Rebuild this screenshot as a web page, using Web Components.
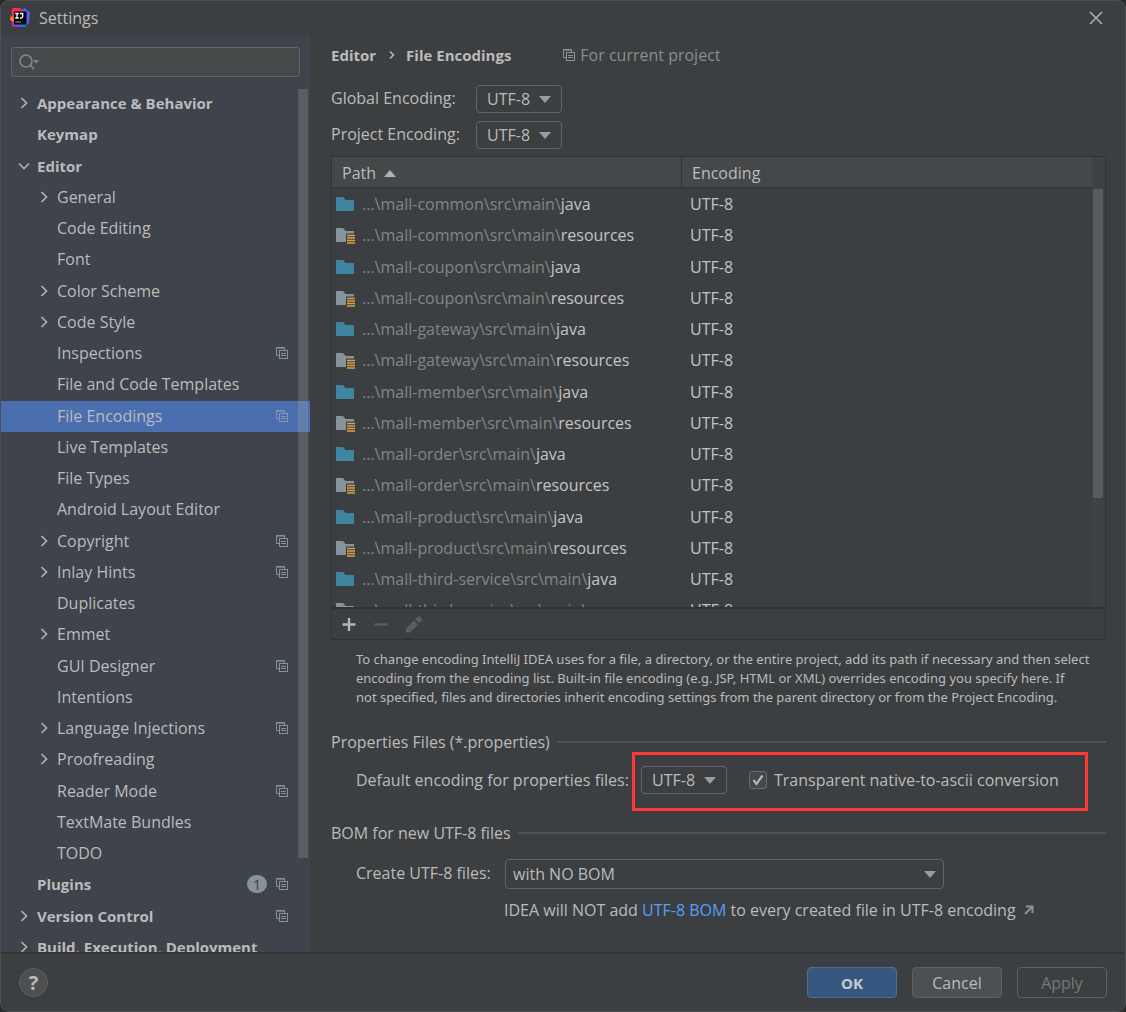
<!DOCTYPE html>
<html lang="en">
<head>
<meta charset="utf-8">
<title>Settings</title>
<style>
  html, body { margin: 0; height: 100%; background: #2b2b2b; }
  body { font: 16px/20px "Open Sans", "Noto Sans", sans-serif; color: #bbbbbb; }
</style>
</head>
<body>
<settings-window></settings-window>
<script>
const define = (name, render) => customElements.define(name, class extends HTMLElement {
  connectedCallback() {
    if (this.shadowRoot) return;
    const root = this.attachShadow({ mode: 'open' });
    const template = document.createElement('template');
    template.innerHTML = render(this);
    root.append(template.content.cloneNode(true));
  }
});

/* Overlapping sheets: marks a setting kept per project */
define('project-mark', () => `
  <style>:host { display: block; width: 12px; height: 12px; flex: none; color: #87939a; } svg { display: block; }</style>
  <svg width="12" height="12" viewBox="0 0 12 12" fill="none" stroke="currentColor" aria-hidden="true">
    <path d="M3 8.500H.5v-8h8V3"/><path d="M1 1.500h7" opacity=".6"/>
    <rect x="3.500" y="3.500" width="8" height="8"/><path d="M5 6.500h5M5 8.500h5"/>
  </svg>`);

define('app-logo', () => `
  <style>:host { display: block; width: 20px; height: 20px; } svg { display: block; }</style>
  <svg width="20" height="20" viewBox="0 0 20 20" aria-hidden="true">
    <path d="M1.500 3 3 0h7l4 4-9 10-4-1-1-4 2-2z" fill="#fe2857"/>
    <path d="m0 10 3-2 2 6-3-.5-2-2z" fill="#fc801d"/>
    <path d="M12 1.500 14.500 0l5 4-1 12-6 3-5-2 5-12z" fill="#3b6cf0"/>
    <path d="m16 3 4 2-1 9-3 2z" fill="#5f5cf5"/>
    <path d="m2 14 5-2 4 7-9-.5z" fill="#a736c4"/>
    <path d="M10 15h7l-2 4-5-.5z" fill="#087cfa"/>
    <rect x="4" y="3.500" width="12.500" height="13" fill="#050505"/>
    <path d="M5.200 5.500h3.600M7 5.500v4.500M5.200 10h3.600M10 5.500h2.700v3q0 1.500-1.500 1.500H10" fill="none" stroke="#fff" stroke-width="1.300"/>
    <path d="M5.500 14h5" stroke="#aaa"/>
  </svg>`);

define('title-bar', () => `
  <style>
    :host { display: flex; align-items: center; height: 34px; padding: 0 22px 0 9px; flex: none; }
    h1 { flex: 1; margin: 0 0 0 9px; font: inherit; }
    button { border: 0; padding: 0; background: none; width: 14px; height: 14px; color: #bbb; }
    svg { display: block; }
  </style>
  <app-logo></app-logo><h1><slot></slot></h1>
  <button aria-label="Close"><svg width="14" height="14" viewBox="0 0 14 14" stroke="currentColor" stroke-width="1.300"><path d="m1 1 12 12M13 1 1 13"/></svg></button>`);

define('search-field', () => `
  <style>
    :host { display: flex; align-items: center; height: 28px; margin: 12px 10px 11px; border: 1px solid #646464; border-radius: 3px; background: #45494a; padding-left: 6px; }
    svg { flex: none; }
    input { flex: 1; min-width: 0; border: 0; background: none; color: inherit; font: inherit; outline: 0; }
  </style>
  <svg width="22" height="18" viewBox="0 0 22 18" fill="none" stroke="#7f8b91" stroke-width="1.600" aria-hidden="true">
    <circle cx="8" cy="8" r="6"/><path d="m12.200 12.200 3.800 3.800"/><path d="M15 7h6l-3 3.500z" fill="#7f8b91" stroke="none"/>
  </svg>
  <input type="text" aria-label="Search settings">`);

define('tree-row', el => {
  const chevron = el.hasAttribute('open') ? 'm1 3.500 5 5 5-5' : 'm3.500 1 5 5-5 5';
  return `
  <style>
    :host { display: flex; align-items: center; box-sizing: border-box; height: 31px; padding: 0 22px 2px 17px; white-space: nowrap; }
    :host([child]) { padding-left: 37px; }
    :host(:not([child])) { font-weight: 700; font-size: 15px; }
    :host([selected]) { background: #4b6eaf; }
    svg { flex: none; margin-right: 7px; }
    .text { flex: 1; }
    .count { width: 20px; height: 18px; margin-right: 9px; border-radius: 9px; background: #87939a; color: #3c3f41; font: 15px/18px "Open Sans", sans-serif; text-align: center; }
    :host([selected]) project-mark { color: #8797b3; }
  </style>
  <svg width="12" height="12" viewBox="0 0 12 12" fill="none" stroke="#afb1b3" stroke-width="1.700" aria-hidden="true">${el.hasAttribute('group') ? `<path d="${chevron}"/>` : ''}</svg>
  <span class="text"><slot></slot></span>
  ${el.hasAttribute('count') ? `<span class="count">${el.getAttribute('count')}</span>` : ''}
  ${el.hasAttribute('shared') ? '<project-mark></project-mark>' : ''}`;
});

const rows = [
  ['Appearance & Behavior', 'group'], ['Keymap', ''], ['Editor', 'group open'],
  ['General', 'child group'], ['Code Editing', 'child'], ['Font', 'child'],
  ['Color Scheme', 'child group'], ['Code Style', 'child group'], ['Inspections', 'child shared'],
  ['File and Code Templates', 'child'], ['File Encodings', 'child shared selected'],
  ['Live Templates', 'child'], ['File Types', 'child'], ['Android Layout Editor', 'child'],
  ['Copyright', 'child group shared'], ['Inlay Hints', 'child group shared'], ['Duplicates', 'child'],
  ['Emmet', 'child group'], ['GUI Designer', 'child shared'], ['Intentions', 'child'],
  ['Language Injections', 'child group shared'], ['Proofreading', 'child group'],
  ['Reader Mode', 'child shared'], ['TextMate Bundles', 'child'], ['TODO', 'child'],
  ['Plugins', 'count="1" shared'], ['Version Control', 'group shared'],
  ['Build, Execution, Deployment', 'group']
];

define('settings-tree', () => `
  <style>
    :host { display: block; position: relative; flex: 1; min-height: 0; overflow: hidden; }
    tree-row:nth-child(4n+2) { height: 32px; }
    .thumb { position: absolute; top: 1px; right: 2px; width: 10px; height: 89%; background: rgba(166, 166, 166, .28); }
  </style>
  <div role="tree">${rows.map(([label, attrs]) => `<tree-row role="treeitem" ${attrs}>${label.replace('&', '&amp;')}</tree-row>`).join('')}</div>
  <div class="thumb"></div>`);

define('side-panel', () => `
  <style>:host { display: flex; flex-direction: column; width: 309px; flex: none; background: #3e434c; overflow: hidden; }</style>
  <search-field></search-field><settings-tree></settings-tree>`);

/* Labelled drop-down; "wide" gives the full-size combo box */
define('drop-down', el => `
  <style>
    :host { display: flex; align-items: center; }
    .label { width: var(--label-width, auto); padding-bottom: 2px; white-space: nowrap; }
    .box { position: relative; }
    select { appearance: none; display: block; box-sizing: border-box; width: 86px; height: 28px; margin: 0; padding: 0 0 0 10px; border: 1px solid #646464; border-radius: 4px; background: #3c3f41; color: inherit; font: inherit; }
    svg { position: absolute; right: 11px; top: 50%; margin-top: -3px; pointer-events: none; }
    :host([wide]) select { width: 439px; height: 30px; padding-left: 7px; }
    :host([wide]) svg { right: 8px; }
  </style>
  <label class="label" for="list"><slot></slot></label>
  <span class="box"><select id="list" ${el.hasAttribute('name-text') ? `aria-label="${el.getAttribute('name-text')}"` : ''}><option>${el.getAttribute('value')}</option></select>
  <svg width="12" height="7" viewBox="0 0 12 7" aria-hidden="true"><path d="M0 0h12L6 7z" fill="#9a9da0"/></svg></span>`);

const folder = res => `<svg width="20" height="18" viewBox="0 0 20 18" aria-hidden="true">
  <path d="M0 2h7l2.500 3H18v11H0z" fill="${res ? '#87939a' : '#3e86a0'}"/>
  ${res ? '<path d="M10 7.500h10V18H10z" fill="#3c3f41"/><path d="M11 9.500h8M11 12h8M11 14.500h8M11 17h8" stroke="#d9a343" stroke-width="1.400"/>' : ''}</svg>`;

define('path-table', () => {
  const modules = ['common', 'coupon', 'gateway', 'member', 'order', 'product', 'third-service'];
  const body = modules.flatMap(m => ['java', 'resources'].map(leaf => `
    <tr><td><div class="path">${folder(leaf !== 'java')}<span><span class="dir">...\\mall-${m}\\src\\main\\</span>${leaf}</span></div></td><td>UTF-8</td></tr>`)).join('');
  return `
  <style>
    :host { display: flex; flex-direction: column; flex: 1; min-height: 0; border: 1px solid #323232; }
    .scroll { position: relative; flex: 1; min-height: 0; overflow: hidden; padding-right: 13px; background: linear-gradient(#3f4244, #3f4244) right / 13px 100% no-repeat; }
    table { width: 100%; border-spacing: 0; table-layout: fixed; background: #3c3f41; }
    th { box-sizing: border-box; height: 32px; padding: 2px 10px 0; background: #45484a; border-bottom: 2px solid #37393b; text-align: left; font-weight: 400; }
    th:first-child { width: 350px; border-right: 1px solid #323232; }
    th svg { margin: 0 0 2px 4px; }
    td { box-sizing: border-box; height: 31px; padding: 0 8px 2px; color: #c4c4c4; }
    td:first-child { padding: 0 4px 2px; }
    tr:nth-child(4n+2) td { height: 32px; }
    .path { display: flex; align-items: center; gap: 6px; white-space: nowrap; }
    .dir { color: #858585; }
    .thumb { position: absolute; top: 32px; right: 2px; width: 10px; height: 309px; background: #595c5d; }
    .tools { display: flex; align-items: center; gap: 12px; height: 30px; padding-left: 7px; border-top: 2px solid #323232; }
    button { width: 20px; height: 20px; padding: 0; border: 0; background: none; color: #b4b6b8; }
    button:disabled { color: #5b5e60; }
    button svg { display: block; }
  </style>
  <div class="scroll">
    <table>
      <thead><tr><th>Path <svg width="12" height="7" viewBox="0 0 12 7" aria-hidden="true"><path d="M0 7h12L6 0z" fill="#afb1b3"/></svg></th><th>Encoding</th></tr></thead>
      <tbody>${body}</tbody>
    </table>
    <div class="thumb"></div>
  </div>
  <div class="tools">
    <button aria-label="Add"><svg width="20" height="20" stroke="currentColor" stroke-width="2.400"><path d="M10 4v13M3.500 10.500h13"/></svg></button>
    <button aria-label="Remove" disabled><svg width="20" height="20" stroke="currentColor" stroke-width="2.400"><path d="M3.500 10.500h13"/></svg></button>
    <button aria-label="Edit" disabled><svg width="20" height="20" fill="currentColor"><path d="M3 14.500v4h4l8-8-4-4zM12.200 5.300l4 4 3-3-.2-1.300-2.500-2.500-1.300-.2z"/></svg></button>
  </div>`;
});

define('titled-rule', () => `
  <style>
    :host { display: flex; align-items: center; gap: 7px; height: 20px; }
    .line { flex: 1; height: 2px; background: #515151; }
  </style>
  <slot></slot><span class="line"></span>`);

define('check-option', () => `
  <style>
    :host { display: flex; align-items: center; gap: 7px; white-space: nowrap; }
    input { appearance: none; box-sizing: border-box; width: 18px; height: 18px; margin: 0; border: 1px solid #6b6b6b; border-radius: 3px; background: #43494a; }
    .box { position: relative; display: block; height: 18px; }
    svg { position: absolute; inset: 0; pointer-events: none; }
    input:not(:checked) + svg { display: none; }
  </style>
  <span class="box"><input type="checkbox" id="tick" checked><svg width="18" height="18" viewBox="0 0 18 18" fill="none" stroke="#b4b6b8" stroke-width="2.200" aria-hidden="true"><path d="m4.500 9 3 4 6-8.500"/></svg></span>
  <label for="tick"><slot></slot></label>`);

define('encoding-page', () => `
  <style>
    :host { display: flex; flex-direction: column; flex: 1; min-width: 0; padding: 10px 19px 0 21px; }
    .crumbs { display: flex; align-items: center; height: 20px; font-size: 15px; font-weight: 700; }
    .crumbs svg { margin: 0 11px 0 13px; }
    .scope { display: flex; align-items: center; gap: 5px; margin-left: 52px; font-size: 16px; font-weight: 400; color: #8c8c8c; }
    .pair { display: flex; flex-direction: column; gap: 8px; margin: 20px 0 7px; --label-width: 145px; }
    .note { margin: 10px 0 25px 25px; font: 13px/19px "Noto Sans", sans-serif; white-space: nowrap; }
    .indent { display: flex; align-items: center; margin: 0 0 12px 25px; }
    .caption { width: 276px; padding-bottom: 4px; white-space: nowrap; }
    .marked { display: flex; align-items: center; gap: 22px; box-sizing: border-box; width: 456px; height: 59px; padding: 0 0 3px 6px; border: 3px solid #ff3838; }
    .combo { --label-width: 149px; margin: 16px 0 11px 25px; }
    .hint { margin: 0 0 32px 173px; display: flex; align-items: center; gap: 8px; white-space: nowrap; }
    a { color: #589df6; text-decoration: none; }
  </style>
  <div class="crumbs">Editor
    <svg width="6" height="10" viewBox="0 0 6 10" fill="none" stroke="#bbb" stroke-width="1.500" aria-hidden="true"><path d="m1 1.500 3.500 3.500L1 8.500"/></svg>
    File Encodings <span class="scope"><project-mark></project-mark>For current project</span></div>
  <div class="pair"><drop-down value="UTF-8">Global Encoding:</drop-down><drop-down value="UTF-8">Project Encoding:</drop-down></div>
  <path-table></path-table>
  <div class="note">To change encoding IntelliJ IDEA uses for a file, a directory, or the entire project, add its path if necessary and then select<br>encoding from the encoding list. Built-in file encoding (e.g. JSP, HTML or XML) overrides encoding you specify here. If<br>not specified, files and directories inherit encoding settings from the parent directory or from the Project Encoding.</div>
  <titled-rule>Properties Files (*.properties)</titled-rule>
  <div class="indent"><span class="caption">Default encoding for properties files:</span>
    <div class="marked"><drop-down value="UTF-8" name-text="Default encoding for properties files"></drop-down><check-option>Transparent native-to-ascii conversion</check-option></div></div>
  <titled-rule>BOM for new UTF-8 files</titled-rule>
  <drop-down class="combo" wide value="with NO BOM">Create UTF-8 files:</drop-down>
  <div class="hint"><span>IDEA will NOT add <a href="#bom">UTF-8 BOM</a> to every created file in UTF-8 encoding</span>
    <svg width="10" height="10" viewBox="0 0 10 10" fill="none" stroke="#87939a" stroke-width="2" aria-hidden="true"><path d="M2 1.500h6.500V8M8 2 1 9"/></svg></div>`);

define('dialog-button', el => `
  <style>
    :host { display: block; }
    button { box-sizing: border-box; display: block; width: 90px; height: 31px; padding: 0; border: 1px solid #5e6060; border-radius: 4px; background: #4c5052; color: #bbb; font: inherit; }
    :host([primary]) button { background: #365880; border-color: #4c708c; font-weight: 700; font-size: 15px; color: #c8cdd2; }
    button:disabled { background: none; color: #777; }
    :host([round]) button { width: 29px; height: 29px; border-radius: 50%; font-weight: 700; font-size: 20px; line-height: 27px; }
  </style>
  <button ${el.hasAttribute('disabled') ? 'disabled' : ''}><slot></slot></button>`);

define('button-bar', () => `
  <style>
    :host { display: flex; align-items: center; gap: 15px; height: 57px; padding: 0 18px; flex: none; border-top: 2px solid #313335; }
    .gap { flex: 1; }
  </style>
  <dialog-button round>?</dialog-button><span class="gap"></span>
  <dialog-button primary>OK</dialog-button><dialog-button>Cancel</dialog-button><dialog-button disabled>Apply</dialog-button>`);

define('settings-window', () => `
  <style>
    :host { display: flex; flex-direction: column; box-sizing: border-box; height: 100vh; min-height: 760px; border: 1px solid #4d5052; border-radius: 9px; background: #3c3f41; overflow: hidden; }
    main { display: flex; flex: 1; min-height: 0; }
  </style>
  <title-bar>Settings</title-bar>
  <main><side-panel></side-panel><encoding-page></encoding-page></main>
  <button-bar></button-bar>`);
</script>
</body>
</html>
